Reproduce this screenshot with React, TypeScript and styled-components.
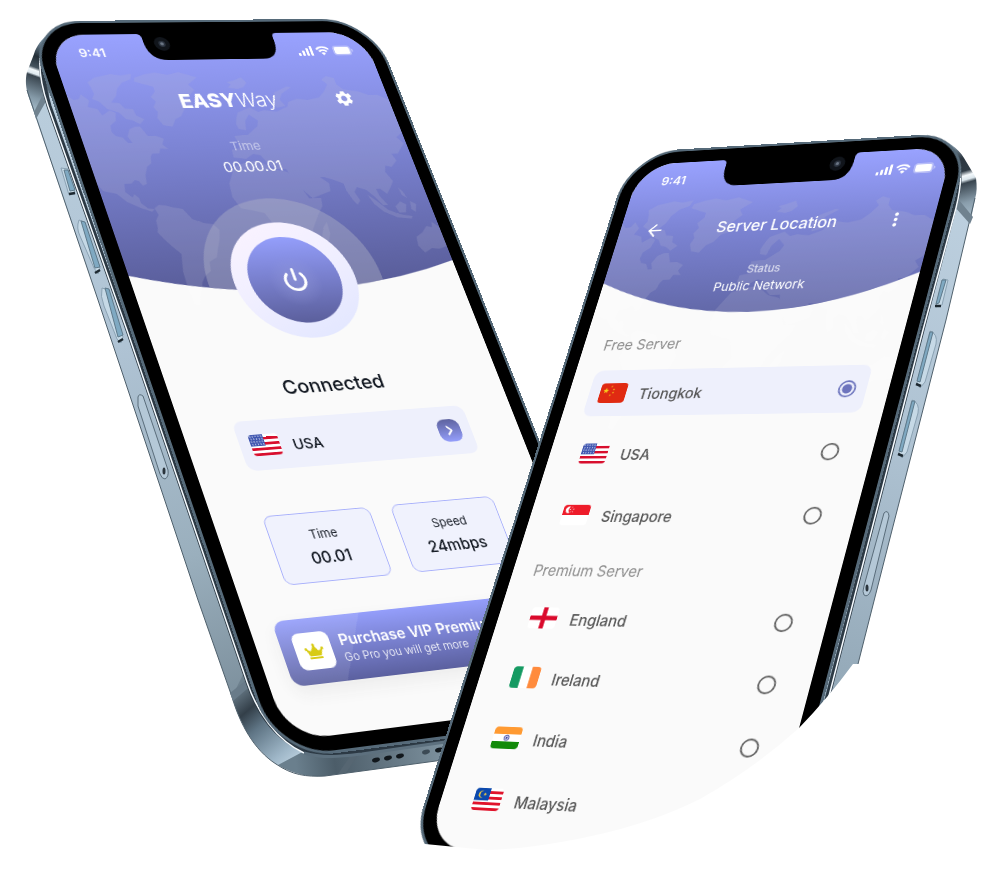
import React, { useLayoutEffect, useRef, useState } from 'react';
import styled, { createGlobalStyle, css } from 'styled-components';
import { ArrowLeft, ChevronRight, Power } from 'lucide-react';
import { MdMoreVert, MdSettings } from 'react-icons/md';
import { FaCrown } from 'react-icons/fa';

/* ---------- geometry ---------- */

type Point = [number, number];
type Quad = [Point, Point, Point, Point];

const SCENE_W = 1000;
const SCENE_H = 873;
const SCREEN_W = 375;
const SCREEN_H = 812;
const BEZEL = 18;

const LEFT_QUAD: Quad = [[46, 35], [362, 32], [626, 698], [288, 741]];
const RIGHT_QUAD: Quad = [[641, 165], [953, 147], [762, 868], [426, 847]];

/** Perspective matrix that lays a flat screen onto the four given corners. */
function project([p0, p1, p2, p3]: Quad): string {
  const dx1 = p1[0] - p2[0];
  const dy1 = p1[1] - p2[1];
  const dx2 = p3[0] - p2[0];
  const dy2 = p3[1] - p2[1];
  const sx = p0[0] - p1[0] + p2[0] - p3[0];
  const sy = p0[1] - p1[1] + p2[1] - p3[1];
  const det = dx1 * dy2 - dx2 * dy1;
  const g = (sx * dy2 - dx2 * sy) / det;
  const h = (dx1 * sy - dy1 * sx) / det;
  const m = [
    (p1[0] - p0[0] + g * p1[0]) / SCREEN_W,
    (p1[1] - p0[1] + g * p1[1]) / SCREEN_W,
    0,
    g / SCREEN_W,
    (p3[0] - p0[0] + h * p3[0]) / SCREEN_H,
    (p3[1] - p0[1] + h * p3[1]) / SCREEN_H,
    0,
    h / SCREEN_H,
    0, 0, 1, 0,
    p0[0], p0[1], 0, 1,
  ];
  return `matrix3d(${m.map((n) => n.toFixed(9)).join(',')})`;
}

/* ---------- shared styles ---------- */

const GlobalStyle = createGlobalStyle`
  *, *::before, *::after { box-sizing: border-box; }
  body {
    margin: 0;
    background: #ffffff;
    font-family: Inter, "Open Sans", sans-serif;
    -webkit-font-smoothing: antialiased;
  }
  h1, h2, p, ul, dl, dd { margin: 0; padding: 0; }
  button { font: inherit; color: inherit; background: none; border: 0; padding: 0; cursor: pointer; }
`;

const Stage = styled.main`
  position: relative;
  width: 100%;
  aspect-ratio: ${SCENE_W} / ${SCENE_H};
  overflow: hidden;
`;

const Canvas = styled.div`
  position: absolute;
  inset: 0 auto auto 0;
  width: ${SCENE_W}px;
  height: ${SCENE_H}px;
  transform-origin: 0 0;
`;

const Device = styled.section<{ $crop?: string }>`
  position: absolute;
  inset: 0;
  pointer-events: none;
  ${(p) => p.$crop && css`clip-path: path('${p.$crop}');`}
`;

const Chassis = styled.svg`
  position: absolute;
  inset: 0;
  width: 100%;
  height: 100%;
`;

const Front = styled.div<{ $quad: Quad }>`
  position: absolute;
  top: 0;
  left: 0;
  padding: 15px;
  border: 3px solid #566a79;
  border-radius: 62px;
  background: #000000;
  transform-origin: 0 0;
  transform: ${(p) => project(p.$quad)} translate(-${BEZEL}px, -${BEZEL}px);
  pointer-events: auto;
`;

const Screen = styled.div`
  position: relative;
  display: flex;
  flex-direction: column;
  width: ${SCREEN_W}px;
  height: ${SCREEN_H}px;
  border-radius: 44px;
  overflow: hidden;
  background: #fafafa;
  color: #10161f;
`;

const Backdrop = styled.svg`
  position: absolute;
  top: 0;
  left: 0;
  width: 100%;
  height: 360px;
`;

const NotchArt = styled.svg`
  position: absolute;
  top: -12px;
  left: 97px;
  width: 180px;
  height: 48px;
`;

const NotchHolder = styled.div`
  position: relative;
  z-index: 2;
  height: 0;
`;

const StatusBar = styled.div<{ $start: number; $end: number }>`
  position: relative;
  display: flex;
  align-items: center;
  justify-content: space-between;
  height: 48px;
  padding: 0 ${(p) => p.$end}px 0 ${(p) => p.$start}px;
  color: #ffffff;
  font-size: 15px;
  font-weight: 600;
  line-height: 20px;
`;

const StatusIcons = styled.span`
  display: flex;
  align-items: center;
  gap: 4px;
`;

const TitleBar = styled.header`
  position: relative;
  display: grid;
  grid-template-columns: 28px 1fr 28px;
  align-items: center;
  height: 32px;
  margin: 24px 30px 0;
  color: #ffffff;
  text-align: center;
`;

const IconButton = styled.button`
  display: grid;
  place-items: center;
  width: 28px;
  height: 28px;
`;

const Brand = styled.h1`
  grid-column: 2;
  font-size: 24px;
  line-height: 32px;
  font-weight: 300;
  b { font-weight: 800; }
`;

const PageTitle = styled.h1`
  padding-left: 8px;
  font-size: 19px;
  line-height: 32px;
  font-weight: 500;
`;

const HeaderFact = styled.div<{ $large?: boolean }>`
  position: relative;
  display: flex;
  flex-direction: column;
  align-items: center;
  gap: ${(p) => (p.$large ? 4 : 0)}px;
  margin-top: ${(p) => (p.$large ? 32 : 28)}px;
  padding-left: ${(p) => (p.$large ? 0 : 8)}px;
  color: #ffffff;
  font-size: ${(p) => (p.$large ? 17 : 15)}px;
  line-height: 24px;
  small {
    font-size: ${(p) => (p.$large ? 15 : 13)}px;
    line-height: 20px;
    font-weight: ${(p) => (p.$large ? 400 : 500)};
    color: rgba(255, 255, 255, ${(p) => (p.$large ? 0.5 : 0.7)});
  }
`;

/* ---------- home screen ---------- */

const HomeTop = styled.div`
  display: flex;
  flex-direction: column;
  padding-right: 10px;
`;

const PowerButton = styled.button`
  position: relative;
  align-self: center;
  display: grid;
  place-items: center;
  width: 140px;
  height: 140px;
  margin-top: 58px;
  border-radius: 50%;
  background: linear-gradient(155deg, #f9f2ff 10%, #f1efff 45%, #e3e7ff 90%);
`;

const PowerFace = styled.span`
  display: grid;
  place-items: center;
  width: 104px;
  height: 104px;
  border-radius: 50%;
  background:
    radial-gradient(circle at 50% 52%, rgba(150, 156, 220, 0.5), rgba(150, 156, 220, 0) 40%),
    linear-gradient(180deg, #949efb 0%, #5b5f9c 100%);
  color: #ffffff;
`;

const Connection = styled.h2`
  margin-top: 41px;
  text-align: center;
  font-size: 22px;
  font-weight: 500;
  line-height: 28px;
`;

const LocationButton = styled.button`
  display: flex;
  align-items: center;
  gap: 14px;
  height: 56px;
  margin: 21px 56px 0;
  padding: 0 12px;
  border-radius: 10px;
  background: #eef0fc;
  color: #10161f;
  font-size: 16px;
  font-weight: 500;
`;

const RowName = styled.span`
  padding-top: 4px;
`;

const Chevron = styled.span`
  display: grid;
  place-items: center;
  width: 26px;
  height: 26px;
  margin-left: auto;
  border-radius: 9px;
  background: linear-gradient(180deg, #5e639f, #949efb);
  color: #ffffff;
`;

const Stats = styled.dl`
  display: grid;
  grid-template-columns: 1fr 1fr;
  gap: 24px;
  margin: 50px 62px 0 53px;
`;

const Stat = styled.div`
  display: flex;
  flex-direction: column;
  align-items: center;
  gap: 4px;
  height: 76px;
  padding-top: 13px;
  border: 1px solid #a9b1fb;
  border-radius: 9px;
  background: #f0f2fd;
  dt { font-size: 13px; line-height: 20px; }
  dd { font-size: 17px; line-height: 24px; font-weight: 500; }
`;

const Banner = styled.button`
  display: flex;
  align-items: center;
  gap: 10px;
  height: 69px;
  margin: 36px 25px 0;
  padding: 0 14px;
  border-radius: 12px;
  background:
    linear-gradient(118deg, rgba(255, 255, 255, 0.09) 0 26%, rgba(255, 255, 255, 0) 26%),
    linear-gradient(180deg, #949efb, #5b609f);
  box-shadow: 0 8px 18px rgba(60, 60, 60, 0.07);
  color: #ffffff;
  text-align: left;
`;

const CrownTile = styled.span`
  display: grid;
  place-items: center;
  flex: none;
  width: 39px;
  height: 39px;
  border-radius: 8px;
  background: #ffffff;
  color: #d8cb14;
`;

const BannerText = styled.span`
  display: flex;
  flex-direction: column;
  white-space: nowrap;
  font-size: 12px;
  font-weight: 300;
  line-height: 18px;
  strong { font-size: 16px; font-weight: 600; line-height: 20px; }
`;

/* ---------- server screen ---------- */

const GroupTitle = styled.h2<{ $gap: number }>`
  position: relative;
  margin: ${(p) => p.$gap}px 0 0 25px;
  font-size: 17px;
  font-weight: 400;
  line-height: 24px;
  color: #8b8b8b;
`;

const ServerList = styled.ul<{ $gap: number; $top: number }>`
  position: relative;
  display: flex;
  flex-direction: column;
  gap: ${(p) => p.$gap}px;
  margin: ${(p) => p.$top}px 25px 0;
  list-style: none;
`;

const ServerRow = styled.label<{ $active: boolean }>`
  display: flex;
  align-items: center;
  gap: 16px;
  height: 56px;
  padding: 0 12px 0 13px;
  border-radius: 10px;
  background: ${(p) => (p.$active ? '#eef0fc' : 'transparent')};
  color: #555555;
  font-size: 17px;
  font-weight: 500;
  cursor: pointer;
`;

const Radio = styled.input`
  appearance: none;
  width: 20px;
  height: 20px;
  margin: 0 0 0 auto;
  border: 2px solid #626262;
  border-radius: 50%;
  &:checked {
    border-color: #7078bf;
    background: radial-gradient(circle, #6d74bd 0 5px, transparent 6px);
  }
`;

const FlagArt = styled.svg`
  flex: none;
  width: 32px;
  height: 24px;
  border-radius: 4px;
  background: #ffffff;
`;

/* ---------- drawings ---------- */

type FlagName = 'china' | 'usa' | 'singapore' | 'england' | 'ireland' | 'india' | 'malaysia';

const star = (cx: number, cy: number, r: number) =>
  Array.from({ length: 10 }, (_, i) => {
    const a = (Math.PI / 5) * i - Math.PI / 2;
    const q = i % 2 ? r * 0.42 : r;
    return `${cx + q * Math.cos(a)},${cy + q * Math.sin(a)}`;
  }).join(' ');

function Flag({ name }: { name: FlagName }) {
  return (
    <FlagArt viewBox="0 0 32 24" aria-hidden="true">
      {name === 'china' && (
        <>
          <rect width="32" height="24" fill="#e02a12" />
          <polygon points={star(7, 9, 3.6)} fill="#f7cf1a" />
          {[[13, 4], [16, 7.5], [16, 11.5], [13, 14.5]].map(([x, y]) => (
            <polygon key={y} points={star(x, y, 1.4)} fill="#f3b61b" />
          ))}
        </>
      )}
      {name === 'usa' && (
        <>
          <rect width="32" height="24" fill="#ffffff" />
          {[3, 9, 15, 21].map((y) => (
            <rect key={y} y={y} width="32" height="3" fill="#d80f2e" />
          ))}
          <rect width="16" height="13" fill="#3f56b0" />
          {[2, 5, 8, 11].map((y, r) =>
            [2, 5, 8, 11, 14].map((x) => (
              <circle key={`${x}-${y}`} cx={x + (r % 2) * 0.6} cy={y} r="0.65" fill="#ffffff" />
            )),
          )}
        </>
      )}
      {name === 'singapore' && (
        <>
          <rect width="32" height="24" fill="#ffffff" />
          <rect width="32" height="12" fill="#ee1c2a" />
          <path d="M8 2.2a4 4 0 1 0 0 7.6a5 5 0 0 1 0-7.6z" fill="#ffffff" />
          {[[10, 3], [8.4, 5.4], [12, 5.2], [9.2, 8], [11.6, 8]].map(([x, y]) => (
            <circle key={`${x}-${y}`} cx={x} cy={y} r="0.6" fill="#ffffff" />
          ))}
        </>
      )}
      {name === 'england' && (
        <>
          <rect width="32" height="24" fill="#ffffff" />
          <path d="M13.4 0h5.2v9.4H32v5.2H18.6V24h-5.2v-9.4H0V9.4h13.4z" fill="#da0a2c" />
        </>
      )}
      {name === 'ireland' && (
        <>
          <rect width="32" height="24" fill="#ffffff" />
          <rect width="10.7" height="24" fill="#159a62" />
          <rect x="21.3" width="10.7" height="24" fill="#ff8b3d" />
        </>
      )}
      {name === 'india' && (
        <>
          <rect width="32" height="24" fill="#ffffff" />
          <rect width="32" height="8" fill="#ff9a32" />
          <rect y="16" width="32" height="8" fill="#118a09" />
          <circle cx="16" cy="12" r="2.9" fill="none" stroke="#27309a" strokeWidth="0.8" />
          <path d="M16 9.5v5M13.5 12h5M14.2 10.2l3.6 3.6M17.8 10.2l-3.6 3.6" stroke="#4048a8" strokeWidth="0.5" />
          <circle cx="16" cy="12" r="0.9" fill="#27309a" />
        </>
      )}
      {name === 'malaysia' && (
        <>
          <rect width="32" height="24" fill="#ffffff" />
          {[3, 9, 15, 21].map((y) => (
            <rect key={y} y={y} width="32" height="3" fill="#e0142c" />
          ))}
          <rect width="17" height="13.3" fill="#0b49ad" />
          <path d="M9.6 3a4 4 0 1 0 0 7.4a3.4 3.4 0 1 1 0-7.4z" fill="#ffd23c" />
          <polygon points={star(11.5, 6.7, 2)} fill="#ffd23c" />
        </>
      )}
    </FlagArt>
  );
}

const CONTINENTS = [
  'M83 56 96 52 108 50 122 53 136 50 155 57 142 66 147 73 137 82 139 88 137 94 128 97 121 106 113 110 107 119 97 117 93 108 96 100 93 94 98 87 94 81 101 74 101 68 92 65 81 61z',
  'M30 67 28 61 38 55 57 51 68 53 81 51 78 58 67 62 59 70 55 79 47 87 56 88 60 95 69 96 70 104 78 109 71 115 64 110 57 108 52 100 40 95 34 86 27 82 31 76z',
  'M0 77 6 83 12 82 16 76 23 84 19 92 29 95 32 103 42 97 48 100 45 110 37 116 36 124 39 129 46 131 50 138 55 138 52 130 57 121 64 118 70 118 75 130 84 130 92 134 88 141 93 147 84 146 81 152 73 152 70 156 68 164 62 168 57 178 55 189 50 191 47 185 43 184 38 188 30 188 28 198 34 205 37 201 41 206 41 212 47 219 54 220 50 223 39 218 26 210 18 200 4 196 0 187z',
  'M54 219 60 215 67 216 76 219 85 221 92 234 103 239 113 241 118 248 114 260 109 270 104 281 94 286 92 297 84 302 78 310 75 318 71 325 67 337 61 335 60 317 61 296 66 275 59 266 53 257 48 248 50 243 51 234 56 227z',
  'M188 64 196 62 207 58 211 65 205 71 198 73 187 71 192 67z',
  'M236 98 233 88 240 78 257 71 262 72 248 80 243 88 247 96z',
  'M188 103 204 97 212 103 220 101 234 103 249 97 252 91 264 87 276 89 291 86 300 78 307 69 302 63 309 58 318 61 318 69 324 76 341 79 352 84 363 84 375 91 375 134 366 140 372 148 360 161 352 161 355 170 346 178 339 176 336 184 341 196 335 204 328 212 322 205 317 205 318 214 324 226 318 226 312 215 305 206 295 202 290 208 293 219 288 224 285 219 281 206 281 197 271 192 261 188 256 188 264 196 262 206 249 210 238 214 231 204 222 186 220 176 208 176 202 170 196 158 188 156 178 162 164 160 165 150 176 148 174 133 184 132 190 132 205 121 208 114 200 106 193 114 190 126 182 124 181 118 184 110z',
  'M161 171 178 166 190 164 206 176 220 180 228 196 234 214 248 214 246 224 237 235 225 252 221 266 214 276 209 286 198 300 187 306 182 296 180 280 176 264 184 252 180 240 176 230 163 226 151 223 146 209 148 192z',
  'M238 250 244 244 243 258 236 272 231 272 232 262z',
  'M304 212 312 220 322 232 334 238 348 241 346 244 330 242 316 234 308 224z',
  'M332 228 340 222 346 226 342 236 334 236z',
  'M352 222 358 226 354 236 350 232zM344 204 348 210 350 218 345 214z',
  'M343 267 352 262 360 254 366 256 368 249 375 256 375 280 365 283 356 282 346 287 341 278z',
];

function HeaderArt({ id, edge, depth, ring }: { id: string; edge: number; depth: number; ring?: boolean }) {
  const ctrl = edge + (depth - edge) * 2;
  const shape = `M0 0H375V${edge}Q188 ${ctrl} 0 ${edge}Z`;
  return (
    <Backdrop viewBox="0 0 375 360" preserveAspectRatio="none" aria-hidden="true">
      <defs>
        <linearGradient id={`${id}-sky`} x1="0" y1="0" x2="0" y2="1">
          <stop offset="0" stopColor="#99a2ff" />
          <stop offset="0.45" stopColor="#7c84d4" />
          <stop offset="1" stopColor={ring ? '#585c98' : '#6268a8'} />
        </linearGradient>
        <clipPath id={`${id}-clip`}>
          <path d={shape} />
        </clipPath>
      </defs>
      <path d={CONTINENTS.join('')} fill="#ffffff" opacity="0.25" />
      <path d={shape} fill={`url(#${id}-sky)`} />
      <g clipPath={`url(#${id}-clip)`}>
        <path d={CONTINENTS.join('')} fill="#b9bbd0" opacity="0.2" />
        {ring && <circle cx="184" cy="312" r="100" fill="#b4b6c8" opacity="0.4" />}
      </g>
    </Backdrop>
  );
}

function Notch({ camera }: { camera: number }) {
  return (
    <NotchHolder>
      <NotchArt viewBox="97 -12 180 48" aria-hidden="true">
        <path d="M98 -12H276V0H268Q263 0 263 6V12Q262 34 242 34H130Q109 34 108 12V6Q108 0 103 0H98Z" fill="#000000" />
        <circle cx={camera} cy="13" r="9" fill="#11151b" />
        <circle cx={camera} cy="13" r="4" fill="#2c3440" />
        <circle cx={camera} cy="13" r="2" fill="#6d7887" />
        <rect x="157" y="-9" width="60" height="3" rx="1" fill="#24272b" />
      </NotchArt>
    </NotchHolder>
  );
}

function Status({ start, end }: { start: number; end: number }) {
  return (
    <StatusBar $start={start} $end={end}>
      <time>9:41</time>
      <StatusIcons>
        <svg width="18" height="13" viewBox="0 0 18 13" fill="currentColor" aria-hidden="true">
          <rect x="0" y="9" width="3" height="4" rx="1" />
          <rect x="5" y="6" width="3" height="7" rx="1" />
          <rect x="10" y="3" width="3" height="10" rx="1" />
          <rect x="15" y="0" width="3" height="13" rx="1" />
        </svg>
        <svg width="17" height="13" viewBox="0 0 17 13" fill="none" stroke="currentColor" strokeWidth="2.2" aria-hidden="true">
          <path d="M1 4.7a10.6 10.6 0 0 1 15 0" />
          <path d="M3.8 7.6a6.7 6.7 0 0 1 9.4 0" />
          <path d="M8.5 12.6l-2.6-2.7a3.7 3.7 0 0 1 5.2 0z" fill="currentColor" stroke="none" />
        </svg>
        <svg width="25" height="13" viewBox="0 0 25 13" aria-hidden="true">
          <rect x="0.5" y="0.5" width="21.5" height="12" rx="3.5" fill="#ffffff" stroke="#ffffff" opacity="0.35" />
          <rect x="2" y="2" width="18.5" height="9" rx="2" fill="#ffffff" />
          <path d="M23.2 4.5v4c.9-.3 1.4-1.1 1.4-2s-.5-1.7-1.4-2z" fill="#ffffff" opacity="0.5" />
        </svg>
      </StatusIcons>
    </StatusBar>
  );
}

function SideKey({ d, shade, light }: { d: string; shade: string; light: string }) {
  return (
    <g>
      <path d={d} fill="#c6d9e6" stroke="#8ba2b3" strokeWidth="1" />
      <path d={light} fill="#7fa9c2" stroke="#5f7a8b" strokeWidth="1" strokeLinejoin="round" />
      <path d={shade} fill="none" stroke="#1d2830" strokeWidth="2.5" />
    </g>
  );
}

function LeftChassis() {
  return (
    <Chassis viewBox="0 0 1000 873" aria-hidden="true">
      <defs>
        <linearGradient id="l-side" gradientUnits="userSpaceOnUse" x1="60" y1="100" x2="260" y2="700">
          <stop offset="0" stopColor="#b9cddc" />
          <stop offset="0.4" stopColor="#afc3d4" />
          <stop offset="0.75" stopColor="#9aafbd" />
          <stop offset="1" stopColor="#7b8e9b" />
        </linearGradient>
        <linearGradient id="l-cap" gradientUnits="userSpaceOnUse" x1="56" y1="44" x2="32" y2="112">
          <stop offset="0" stopColor="#7b93a3" />
          <stop offset="0.1" stopColor="#5b6f7e" />
          <stop offset="0.25" stopColor="#222d36" />
          <stop offset="0.4" stopColor="#46545f" />
          <stop offset="0.44" stopColor="#f1f7fa" />
          <stop offset="0.49" stopColor="#dfe9ef" />
          <stop offset="0.52" stopColor="#39454f" />
          <stop offset="0.8" stopColor="#8499a7" />
          <stop offset="1" stopColor="#a9bfce" />
        </linearGradient>
        <linearGradient id="l-turn" gradientUnits="userSpaceOnUse" x1="236" y1="688" x2="300" y2="764">
          <stop offset="0" stopColor="#6e818e" />
          <stop offset="0.25" stopColor="#333f49" />
          <stop offset="0.45" stopColor="#5f7585" />
          <stop offset="0.8" stopColor="#9fb7c8" />
          <stop offset="1" stopColor="#c2d6e4" />
        </linearGradient>
        <linearGradient id="l-base" gradientUnits="userSpaceOnUse" x1="296" y1="765" x2="450" y2="745">
          <stop offset="0" stopColor="#6a7f8d" />
          <stop offset="0.25" stopColor="#4c5d69" />
          <stop offset="1" stopColor="#8094a1" />
        </linearGradient>
      </defs>
      <path d="M28 95L98 300L198 600L232 697L270 720L250 640L60 90Z" fill="url(#l-side)" />
      <path d="M78 23C55 26 39 38 34 54L27 72C25 80 26 88 28 95L35 115L48 92L66 90L70 60L110 30Z" fill="url(#l-cap)" />
      <path d="M232 697C240 724 254 750 276 764L292 771L330 720L250 660Z" fill="url(#l-turn)" />
      <path d="M278 765C294 775 310 777 325 776L480 755L480 720L330 735L308 749Z" fill="url(#l-base)" />
      <path d="M27 90L98 300L198 600L232 697C240 724 254 750 276 764C292 775 306 777 325 776L480 755" fill="none" stroke="#4f606c" strokeWidth="1" />
      <path d="M44 92L50 90L49 96L36 119L34 112Z" fill="#70828f" />
      <path d="M230 693L250 677L254 683L233 701Z" fill="#697b89" />
      <path d="M353 752L360 752L346 773L338 774Z" fill="#566672" />
      <path d="M43 50C39 66 43 86 49 106L129 333L219 597L248 682C258 712 276 738 304 750C324 757 345 754 362 752L480 735" fill="none" stroke="#2c3944" strokeWidth="5" />
      <path d="M40 58C39 72 42 88 48 106L128 333L218 597L247 682C257 712 276 740 304 753" fill="none" stroke="#f6fbff" strokeWidth="1.5" />
      <path d="M304 753C324 759 345 756 362 754L480 737" fill="none" stroke="#5d707e" strokeWidth="3" />
      <SideKey d="M61 168L68 169L75 194L69 195Z" light="M64 170L68 170L75 190L70 191Z" shade="M69 194L75 193" />
      <SideKey d="M79 220Q76 228 80 236L94 268L98 274L100 268L84 222Z" light="M81 221L85 222L100 267L95 268Z" shade="M95 273L100 270" />
      <SideKey d="M102 288Q100 296 104 306L117 339L121 343L123 337L108 290Z" light="M105 288L109 289L123 335L118 337Z" shade="M118 342L123 339" />
      <path d="M138 397Q139 393 143 396L168 470Q169 477 165 479Q162 479 160 474L138 406Z" fill="#b4c8d7" stroke="#5a6d7b" strokeWidth="1" />
      <ellipse cx="164" cy="471" rx="1.5" ry="3.5" fill="#2a343c" />
      {[[376, 760], [388, 758], [400, 756], [439, 750]].map(([x, y]) => (
        <ellipse key={x} cx={x} cy={y} rx="4" ry="2.2" fill="#11171c" transform={`rotate(-14 ${x} ${y})`} />
      ))}
      <ellipse cx="426" cy="752" rx="4" ry="2.2" fill="#3c4a55" transform="rotate(-14 426 752)" />
    </Chassis>
  );
}

function RightChassis() {
  return (
    <Chassis viewBox="0 0 1000 873" aria-hidden="true">
      <defs>
        <linearGradient id="r-side" gradientUnits="userSpaceOnUse" x1="970" y1="200" x2="850" y2="690">
          <stop offset="0" stopColor="#bdd0df" />
          <stop offset="0.5" stopColor="#aec2d2" />
          <stop offset="1" stopColor="#94a9b8" />
        </linearGradient>
        <linearGradient id="r-cap" gradientUnits="userSpaceOnUse" x1="950" y1="145" x2="972" y2="222">
          <stop offset="0" stopColor="#8ea4b3" />
          <stop offset="0.2" stopColor="#2c3741" />
          <stop offset="0.36" stopColor="#303c46" />
          <stop offset="0.42" stopColor="#f3f8fb" />
          <stop offset="0.47" stopColor="#dbe6ec" />
          <stop offset="0.51" stopColor="#39454f" />
          <stop offset="0.75" stopColor="#8a9eac" />
          <stop offset="1" stopColor="#aec3d1" />
        </linearGradient>
      </defs>
      <path d="M975 198L946 320L890 538L858 664L800 740L830 640L940 190Z" fill="url(#r-side)" />
      <path d="M928 136C948 140 958 148 964 158L976 178C977 186 977 192 975 199L971 220L957 202L940 200L930 160Z" fill="url(#r-cap)" />
      <path d="M975 198L946 320L890 538L858 664" fill="none" stroke="#4f606c" strokeWidth="1" />
      <path d="M954 199L959 200L973 217L970 224L954 206Z" fill="#70828f" />
      <path d="M950 150C962 164 961 184 954 208L922 330L827 700" fill="none" stroke="#2c3944" strokeWidth="5" />
      <path d="M955 154C963 166 962 184 956 208L923 330L828 700" fill="none" stroke="#f6fbff" strokeWidth="1.5" />
      <SideKey d="M943 279L948 280L942 305L936 307Z" light="M942 280L946 280L939 303L936 304Z" shade="M935 306L941 306" />
      <SideKey d="M930 331Q938 334 936 344L925 382L920 388L917 383Z" light="M930 332L933 332L920 382L917 381Z" shade="M916 384L921 386" />
      <SideKey d="M912 400Q920 403 918 413L907 452L902 458L899 453Z" light="M912 401L915 401L902 452L899 451Z" shade="M898 454L903 456" />
      <path d="M884 513Q888 509 889 516L871 590Q868 598 864 595Q862 592 864 586Z" fill="#b4c8d7" stroke="#5a6d7b" strokeWidth="1" />
      <ellipse cx="867" cy="588" rx="1.5" ry="3.5" fill="#2a343c" />
    </Chassis>
  );
}

/* ---------- screens ---------- */

function HomeScreen() {
  const [on, setOn] = useState(true);
  return (
    <Screen>
      <HeaderArt id="home" edge={298} depth={325} ring />
      <Notch camera={129} />
      <Status start={30} end={20} />
      <HomeTop>
        <TitleBar>
          <Brand><b>EASY</b>Way</Brand>
          <IconButton aria-label="Settings"><MdSettings size={24} /></IconButton>
        </TitleBar>
        <HeaderFact $large>
          <small>Time</small>
          00.00.01
        </HeaderFact>
        <PowerButton aria-label="Power" aria-pressed={on} onClick={() => setOn(!on)}>
          <PowerFace><Power size={30} strokeWidth={2.6} /></PowerFace>
        </PowerButton>
        <Connection>{on ? 'Connected' : 'Disconnected'}</Connection>
      </HomeTop>
      <LocationButton>
        <Flag name="usa" />
        <RowName>USA</RowName>
        <Chevron><ChevronRight size={18} strokeWidth={2.6} /></Chevron>
      </LocationButton>
      <Stats>
        <Stat><dt>Time</dt><dd>00.01</dd></Stat>
        <Stat><dt>Speed</dt><dd>24mbps</dd></Stat>
      </Stats>
      <Banner>
        <CrownTile><FaCrown size={20} /></CrownTile>
        <BannerText>
          <strong>Purchase VIP Premium</strong>
          Go Pro you will get more
        </BannerText>
      </Banner>
    </Screen>
  );
}

type Server = { name: string; flag: FlagName };

const FREE: Server[] = [
  { name: 'Tiongkok', flag: 'china' },
  { name: 'USA', flag: 'usa' },
  { name: 'Singapore', flag: 'singapore' },
];

const PREMIUM: Server[] = [
  { name: 'England', flag: 'england' },
  { name: 'Ireland', flag: 'ireland' },
  { name: 'India', flag: 'india' },
  { name: 'Malaysia', flag: 'malaysia' },
];

function ServerScreen() {
  const [picked, setPicked] = useState('Tiongkok');
  const rows = (servers: Server[]) =>
    servers.map(({ name, flag }) => (
      <li key={name}>
        <ServerRow $active={picked === name}>
          <Flag name={flag} />
          <RowName>{name}</RowName>
          <Radio type="radio" name="server" checked={picked === name} onChange={() => setPicked(name)} />
        </ServerRow>
      </li>
    ));
  return (
    <Screen>
      <HeaderArt id="server" edge={154} depth={196} />
      <Notch camera={244} />
      <Status start={33} end={14} />
      <TitleBar>
        <IconButton aria-label="Back"><ArrowLeft size={24} strokeWidth={2} /></IconButton>
        <PageTitle>Server Location</PageTitle>
        <IconButton aria-label="More"><MdMoreVert size={26} /></IconButton>
      </TitleBar>
      <HeaderFact>
        <small>Status</small>
        Public Network
      </HeaderFact>
      <GroupTitle $gap={45}>Free Server</GroupTitle>
      <ServerList $top={19} $gap={17}>{rows(FREE)}</ServerList>
      <GroupTitle $gap={25}>Premium Server</GroupTitle>
      <ServerList $top={14} $gap={11}>{rows(PREMIUM)}</ServerList>
    </Screen>
  );
}

const RIGHT_CROP =
  'M400 0H1000V664H853Q828 698 799 728Q755 768 700 799Q650 824 587 837Q530 849 487 850L425 844L400 842Z';

export default function App() {
  const stage = useRef<HTMLElement>(null);
  const [scale, setScale] = useState(1);

  useLayoutEffect(() => {
    const el = stage.current;
    if (!el) return;
    const fit = () => setScale(el.clientWidth / SCENE_W);
    fit();
    const watcher = new ResizeObserver(fit);
    watcher.observe(el);
    return () => watcher.disconnect();
  }, []);

  return (
    <>
      <GlobalStyle />
      <Stage ref={stage}>
        <Canvas style={{ transform: scale === 1 ? undefined : `scale(${scale})` }}>
          <Device aria-label="Connection">
            <LeftChassis />
            <Front $quad={LEFT_QUAD}><HomeScreen /></Front>
          </Device>
          <Device aria-label="Servers" $crop={RIGHT_CROP}>
            <RightChassis />
            <Front $quad={RIGHT_QUAD}><ServerScreen /></Front>
          </Device>
        </Canvas>
      </Stage>
    </>
  );
}
